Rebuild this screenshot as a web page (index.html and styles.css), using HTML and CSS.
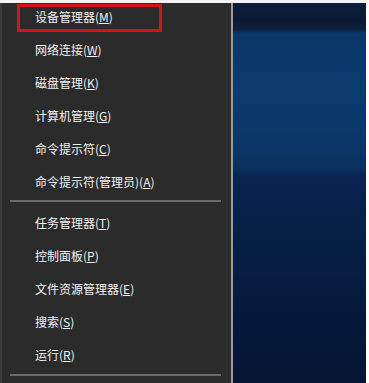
FILE: index.html
```html
<!DOCTYPE html>
<html lang="zh-CN">
<head>
<meta charset="utf-8">
<title>Win+X 菜单</title>
<link rel="stylesheet" href="styles.css">
</head>
<body>
<div class="frame">
  <div class="menu">
    <div class="item highlighted">设备管理器(<u>M</u>)</div>
    <div class="item">网络连接(<u>W</u>)</div>
    <div class="item">磁盘管理(<u>K</u>)</div>
    <div class="item">计算机管理(<u>G</u>)</div>
    <div class="item">命令提示符(<u>C</u>)</div>
    <div class="item">命令提示符(管理员)(<u>A</u>)</div>
    <div class="sep"></div>
    <div class="item">任务管理器(<u>T</u>)</div>
    <div class="item">控制面板(<u>P</u>)</div>
    <div class="item">文件资源管理器(<u>E</u>)</div>
    <div class="item">搜索(<u>S</u>)</div>
    <div class="item">运行(<u>R</u>)</div>
    <div class="sep last"></div>
  </div>
  <div class="edge"></div>
  <div class="desktop"></div>
</div>
</body>
</html>
```

FILE: styles.css
```css
html, body {
  margin: 0;
  padding: 0;
  background: #ffffff;
}
body {
  width: 369px;
  height: 383px;
  overflow: hidden;
}
.frame {
  position: relative;
  display: flex;
  height: 383px;
  margin-right: 3px;
}
.frame::before {
  content: "";
  position: absolute;
  left: 0;
  top: 0;
  right: 0;
  height: 3px;
  background: #f4f4f4;
  z-index: 2;
}
.menu {
  width: 229px;
  flex: none;
  background: #2b2b2b;
  border-left: 2px solid #3b3b3b;
  font-family: "Noto Sans CJK SC", "Noto Sans", sans-serif;
  font-size: 12px;
  color: #f2f2f2;
}
.item {
  position: relative;
  height: 33px;
  line-height: 33px;
  padding-left: 33px;
  white-space: nowrap;
}
.item u {
  text-decoration: underline;
  text-underline-offset: 1px;
}
.highlighted::after {
  content: "";
  position: absolute;
  left: 15px;
  top: 4px;
  width: 139px;
  height: 22px;
  border: 3px solid #d3141c;
}
.sep {
  height: 2px;
  margin: 2px 10px 4px 8px;
  background: #6a6a6a;
}
.sep.last {
  margin-top: 3px;
}
.edge {
  width: 2px;
  flex: none;
  background: #9c9c9c;
}
.desktop {
  flex: 1;
  background:
    linear-gradient(180deg,
      #0c1f3c 0px, #0a1a33 20px, #0d2340 30px,
      #0b3768 33px, #0c3b70 90px, #0b3666 150px,
      #0a2f5a 170px, #082450 176px, #071f45 240px,
      #06193a 320px, #051634 383px);
}
```
